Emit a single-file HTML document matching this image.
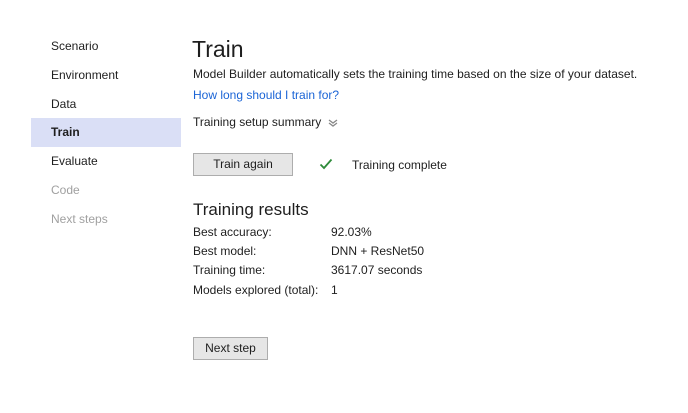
<!DOCTYPE html>
<html><head><style>
body{margin:0;width:688px;height:413px;background:#fff;font-family:"Liberation Sans",sans-serif;font-size:12px;color:#1e1e1e;position:relative;overflow:hidden}
.a{position:absolute;white-space:nowrap;line-height:14px}
.nav{left:51px}
.btn{position:absolute;background:#e6e6e6;border:1px solid #adadad;box-sizing:border-box;text-align:center;line-height:21px}
</style></head><body>
<div style="position:absolute;left:31px;top:118px;width:150px;height:29px;background:#dadff6"></div>
<div class="a nav" style="top:39px">Scenario</div>
<div class="a nav" style="top:68px">Environment</div>
<div class="a nav" style="top:97px">Data</div>
<div class="a nav" style="top:125px;font-weight:bold">Train</div>
<div class="a nav" style="top:154px">Evaluate</div>
<div class="a nav" style="top:183px;color:#a0a0a0">Code</div>
<div class="a nav" style="top:212px;color:#a0a0a0">Next steps</div>

<div class="a" style="left:192px;top:36px;font-size:23px;line-height:26px">Train</div>
<div class="a" style="left:193px;top:67px">Model Builder automatically sets the training time based on the size of your dataset.</div>
<div class="a" style="left:193px;top:88px;color:#1a64d6">How long should I train for?</div>
<div class="a" style="left:193px;top:115px">Training setup summary</div>
<svg style="position:absolute;left:327px;top:118px" width="12" height="10"><path d="M2 2l4 3 4-3M2 5l4 3 4-3" stroke="#888" fill="none" stroke-width="1.3"/></svg>
<div class="btn" style="left:193px;top:153px;width:100px;height:23px">Train again</div>
<svg style="position:absolute;left:319px;top:158px" width="14" height="12"><path d="M1.5 6.5l3.5 3.5 7.5-8.5" stroke="#2e8b3a" fill="none" stroke-width="1.8"/></svg>
<div class="a" style="left:352px;top:158px">Training complete</div>
<div class="a" style="left:193px;top:200px;font-size:17px;line-height:20px">Training results</div>
<div class="a" style="left:193px;top:225px">Best accuracy:</div><div class="a" style="left:331px;top:225px">92.03%</div>
<div class="a" style="left:193px;top:244px">Best model:</div><div class="a" style="left:331px;top:244px">DNN + ResNet50</div>
<div class="a" style="left:193px;top:263px">Training time:</div><div class="a" style="left:331px;top:263px">3617.07 seconds</div>
<div class="a" style="left:193px;top:283px">Models explored (total):</div><div class="a" style="left:331px;top:283px">1</div>
<div class="btn" style="left:193px;top:337px;width:75px;height:23px">Next step</div>
</body></html>
